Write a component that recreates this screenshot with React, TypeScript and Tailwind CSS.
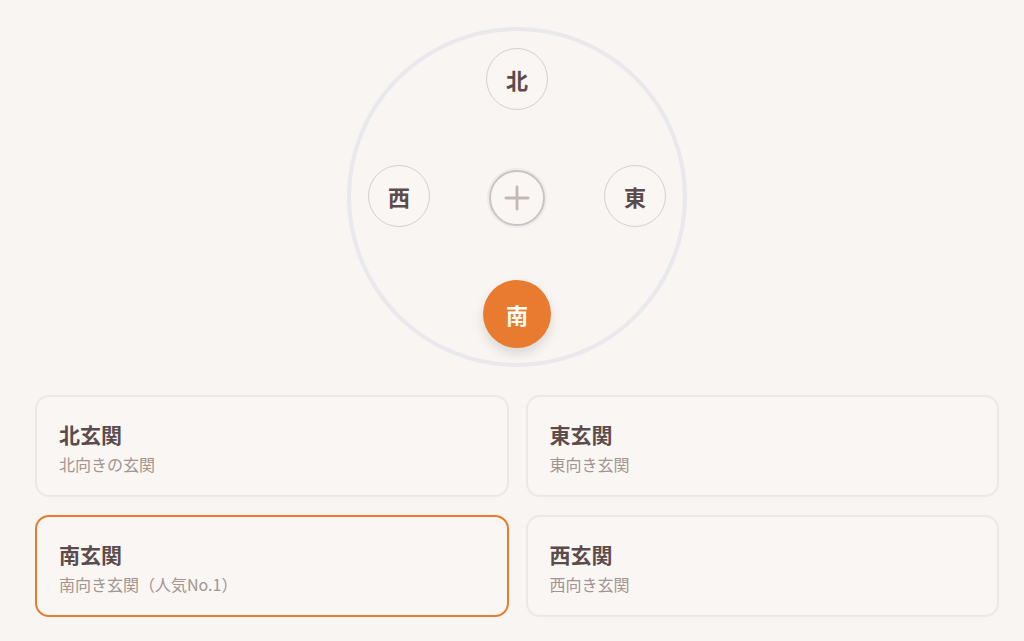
import { Plus } from "lucide-react";

const font = { fontFamily: '"Noto Sans CJK JP", "Noto Sans", sans-serif' };

const entrances = [
  { id: "north", title: "北玄関", desc: "北向きの玄関" },
  { id: "east", title: "東玄関", desc: "東向き玄関" },
  { id: "south", title: "南玄関", desc: "南向き玄関（人気No.1）" },
  { id: "west", title: "西玄関", desc: "西向き玄関" },
];

function Dir({ label, active }: { label: string; active?: boolean }) {
  if (active) {
    return (
      <button className="flex h-[68px] w-[68px] items-center justify-center rounded-full bg-[#e87b30] text-[22px] font-bold text-white shadow-[0_6px_12px_rgba(0,0,0,0.12)]">
        {label}
      </button>
    );
  }
  return (
    <button className="flex h-[62px] w-[62px] items-center justify-center rounded-full border border-[#d6cfcd] bg-[#faf6f3] text-[22px] font-bold text-[#5c4b4b]">
      {label}
    </button>
  );
}

export default function App() {
  const selected = "south";
  return (
    <div className="min-h-screen bg-[#f9f5f2] pl-[35px] pr-[25px] pt-[27px]" style={font}>
      <div className="flex justify-center">
        <div className="flex h-[340px] w-[340px] flex-col items-center rounded-full border-4 border-[#e9e8ec] pt-[17px]">
          <Dir label="北" />
          <div className="mt-[55px] flex w-full items-center justify-between px-[17px]">
            <Dir label="西" />
            <div className="mt-[4px] flex h-[56px] w-[56px] items-center justify-center rounded-full border-2 border-[#cdc3c2] bg-[#faf6f3] shadow-[0_0_0_2px_#ecebee]">
              <Plus className="h-[38px] w-[38px] text-[#c4b8b6]" strokeWidth={1.8} />
            </div>
            <Dir label="東" />
          </div>
          <div className="mt-[53px]">
            <Dir label="南" active />
          </div>
        </div>
      </div>
      <div className="mt-[28px] grid grid-cols-2 gap-x-[17px] gap-y-[18px]">
        {entrances.map((e) => (
          <div
            key={e.id}
            className={
              "h-[102px] rounded-[14px] border-2 bg-[#faf6f3] px-[22px] pt-[23px] " +
              (e.id === selected ? "border-[#e87b30]" : "border-[#ebe8ea]")
            }
          >
            <div className="text-[21px] font-bold leading-[28px] text-[#5c4b4b]">{e.title}</div>
            <div className="mt-[5px] text-[16px] leading-[22px] text-[#a3948f]">{e.desc}</div>
          </div>
        ))}
      </div>
    </div>
  );
}
